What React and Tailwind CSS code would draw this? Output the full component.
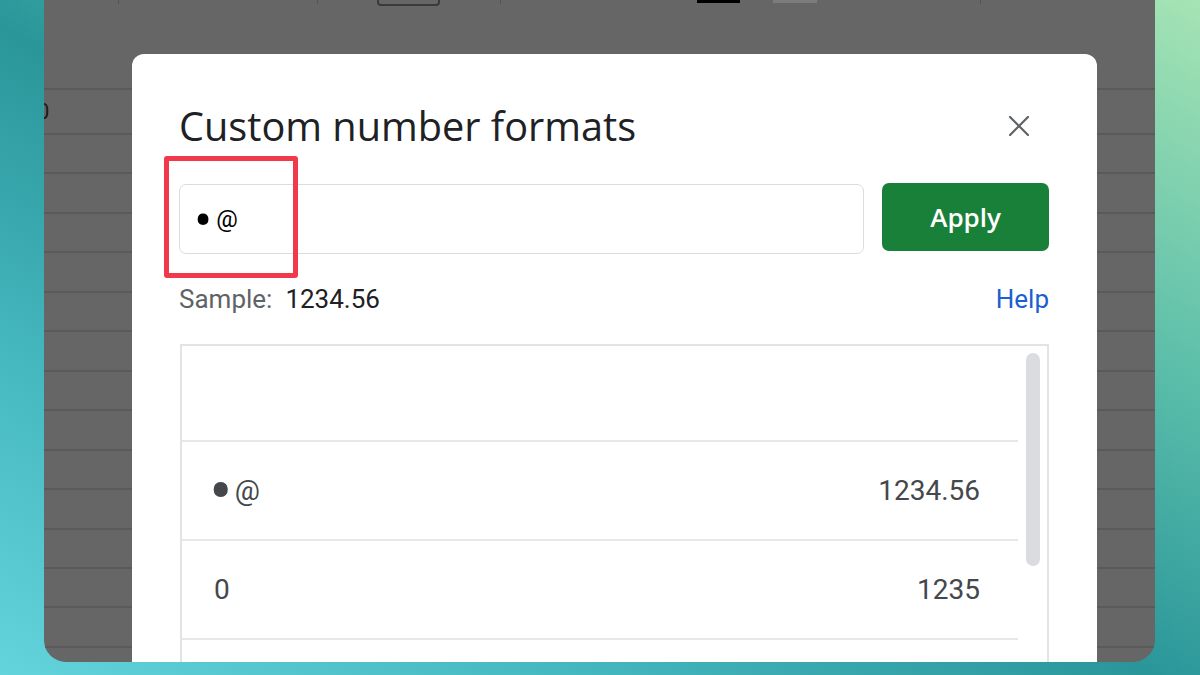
import React from 'react';

const sans = { fontFamily: 'Roboto, "Noto Sans", sans-serif' };

const formats = [
  { code: '', sample: '' },
  { code: '@', bullet: true, sample: '1234.56' },
  { code: '0', sample: '1235' },
  { code: '', sample: '' },
];

const CloseIcon = () => (
  <svg width="20" height="20" viewBox="0 0 20 20" className="mr-[20px]">
    <path d="M1 1 L19 19 M19 1 L1 19" stroke="#5f6368" strokeWidth="2.2" strokeLinecap="square" />
  </svg>
);

const SheetRows = () => {
  const rows = Array.from({ length: 14 });
  return (
    <div>
      {/* toolbar leftovers peeking at the top */}
      <div className="flex items-start h-[90px] border-b-2 border-[#5a5a5a]">
        <div className="ml-[74px] w-px h-[4px] bg-[#555]" />
        <div className="ml-[198px] w-px h-[4px] bg-[#555]" />
        <div className="ml-[59px] w-[63px] h-[6px] border-2 border-t-0 border-[#3a3a3a] rounded-b-[4px]" />
        <div className="ml-[60px] w-px h-[4px] bg-[#555]" />
        <div className="ml-[196px] w-[43px] h-[3px] bg-black" />
        <div className="ml-[33px] w-[44px] h-[3px] bg-[#7c7c7c]" />
        <div className="ml-[163px] w-px h-[4px] bg-[#555]" />
      </div>
      <div className="h-[45px] flex items-center border-b-2 border-[#5a5a5a] overflow-hidden">
        <span className="ml-[-7px] text-[22px] text-[#1c1c1c]" style={sans}>0</span>
      </div>
      {rows.map((_, i) => (
        <div key={i} className="h-[39.46px] border-b-2 border-[#5a5a5a]" />
      ))}
    </div>
  );
};

const Bullet = ({ size }) => (
  <span
    className={
      size === 'lg'
        ? 'text-[70px] leading-[28px] h-[28px] -ml-[5px] mr-[2px] mt-[1px]'
        : 'text-[54px] leading-[24px] h-[24px] -ml-[2px] mr-[4px] mt-[3px]'
    }
  >
    •
  </span>
);

export default function App() {
  return (
    <div className="w-[1200px] h-[675px] overflow-hidden bg-[linear-gradient(to_bottom_left,#a6e4b4_0%,#5cbfaa_28%,#2a969a_52%,#44b6bd_75%,#64d4dc_100%)]">
      <div className="relative ml-[44px] w-[1111px] h-[662px] bg-[#666666] rounded-b-[22px] overflow-hidden">
        <SheetRows />

        {/* dialog */}
        <div className="absolute left-[88px] top-[54px] w-[965px] h-[700px] bg-white rounded-t-[12px] pl-[47px] pr-[48px] pt-[48px]">
          <div className="flex items-center justify-between">
            <h2 className="text-[39.7px] leading-[48px] text-[#202124]" style={{ fontFamily: '"Open Sans", Roboto, sans-serif' }}>
              Custom number formats
            </h2>
            <CloseIcon />
          </div>

          <div className="mt-[34px] flex items-start gap-[18px]">
            <div className="w-[686px] h-[70px] border-[1.5px] border-[#dadce0] rounded-[7px] flex items-center pl-[16px] text-[24px] text-black" style={sans}>
              <Bullet />@
            </div>
            <button className="w-[167px] h-[68px] -mt-px bg-[#188038] rounded-[7px] text-white text-[26px] font-semibold" style={{ fontFamily: '"Open Sans", Roboto, sans-serif' }}>
              Apply
            </button>
          </div>

          <div className="mt-[30px] flex items-center justify-between h-[30px]" style={sans}>
            <div className="flex items-center gap-[13px] text-[26px]">
              <span className="text-[#5f6368]">Sample:</span>
              <span className="text-[#202124]">1234.56</span>
            </div>
            <a className="text-[26px] text-[#1c5fd1]">Help</a>
          </div>

          <div className="mt-[30px] ml-px border-2 border-[#e3e3e3] flex" style={sans}>
            <div className="w-[836px]">
              {formats.map((f, i) => (
                <div
                  key={i}
                  className={
                    (i === 0 ? 'h-[96px] ' : 'h-[99px] ') +
                    'border-b-2 border-[#e8e8e8] flex items-center justify-between pl-[32px] pr-[38px] text-[28px] text-[#44474b]'
                  }
                >
                  <span className="flex items-center">
                    {f.bullet && <Bullet size="lg" />}
                    {f.code}
                  </span>
                  <span>{f.sample}</span>
                </div>
              ))}
            </div>
            <div className="pl-[8px] pt-[7px]">
              <div className="w-[14px] h-[213px] rounded-full bg-[#dadce0]" />
            </div>
          </div>
        </div>

        {/* annotation box */}
        <div className="absolute left-[120px] top-[156px] w-[134px] h-[122px] border-[5px] border-[#f0394a] rounded-[3px]" />
      </div>
    </div>
  );
}
